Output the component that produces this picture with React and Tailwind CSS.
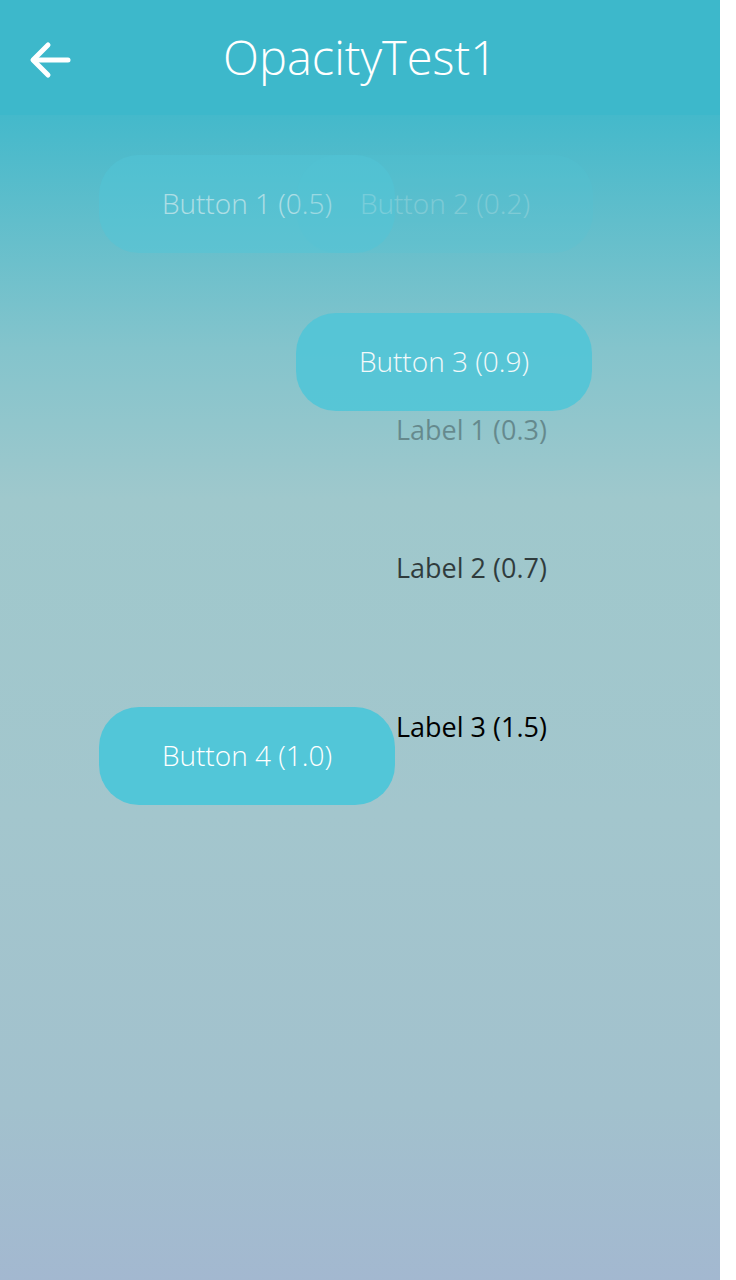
import React from 'react'

const font = { fontFamily: '"Open Sans", "Noto Sans", sans-serif' }

const Btn = ({ label, className }) => (
  <div
    className={`flex h-[98px] w-[296px] shrink-0 items-center justify-center rounded-[40px] bg-[#52c6d8] pb-[2px] text-[28px] font-light text-white ${className}`}
  >
    {label}
  </div>
)

export default function App() {
  return (
    <div className="flex h-[1280px] w-[736px] bg-white" style={font}>
      <div className="flex w-[720px] flex-col">
        {/* Header */}
        <div className="relative flex h-[115px] shrink-0 items-center justify-center bg-[#3db8cb]">
          <button className="absolute left-[28px] top-[40px] text-white">
            <svg width="44" height="40" viewBox="0 0 44 40" fill="none" stroke="currentColor" strokeWidth="5" strokeLinecap="round" strokeLinejoin="round">
              <path d="M40 20H6" />
              <path d="M20 5 5 20l15 15" />
            </svg>
          </button>
          <h1 className="text-[47px] font-light text-white">OpacityTest1</h1>
        </div>

        {/* Body */}
        <div className="flex flex-1 flex-col bg-[linear-gradient(to_bottom,#44b9cb_0%,#84c4cc_20%,#9fc8cc_33%,#a3c6cd_60%,#a2c1cd_85%,#a3b8d0_100%)]">
          <div className="ml-[99px] mt-[40px] flex">
            <Btn label="Button 1 (0.5)" className="opacity-50" />
            <Btn label="Button 2 (0.2)" className="-ml-[98px] opacity-20" />
          </div>

          <div className="ml-[296px] mt-[60px] flex">
            <Btn label="Button 3 (0.9)" className="opacity-90" />
          </div>

          <div className="ml-[396px] mt-[1px] text-[27px] leading-[36px] text-black opacity-30">Label 1 (0.3)</div>
          <div className="ml-[396px] mt-[102px] text-[27px] leading-[36px] text-black opacity-70">Label 2 (0.7)</div>

          <div className="ml-[99px] mt-[121px] flex">
            <Btn label="Button 4 (1.0)" />
            <div className="ml-[1px] mt-[2px] text-[27px] leading-[36px] text-black">Label 3 (1.5)</div>
          </div>
        </div>
      </div>
    </div>
  )
}
